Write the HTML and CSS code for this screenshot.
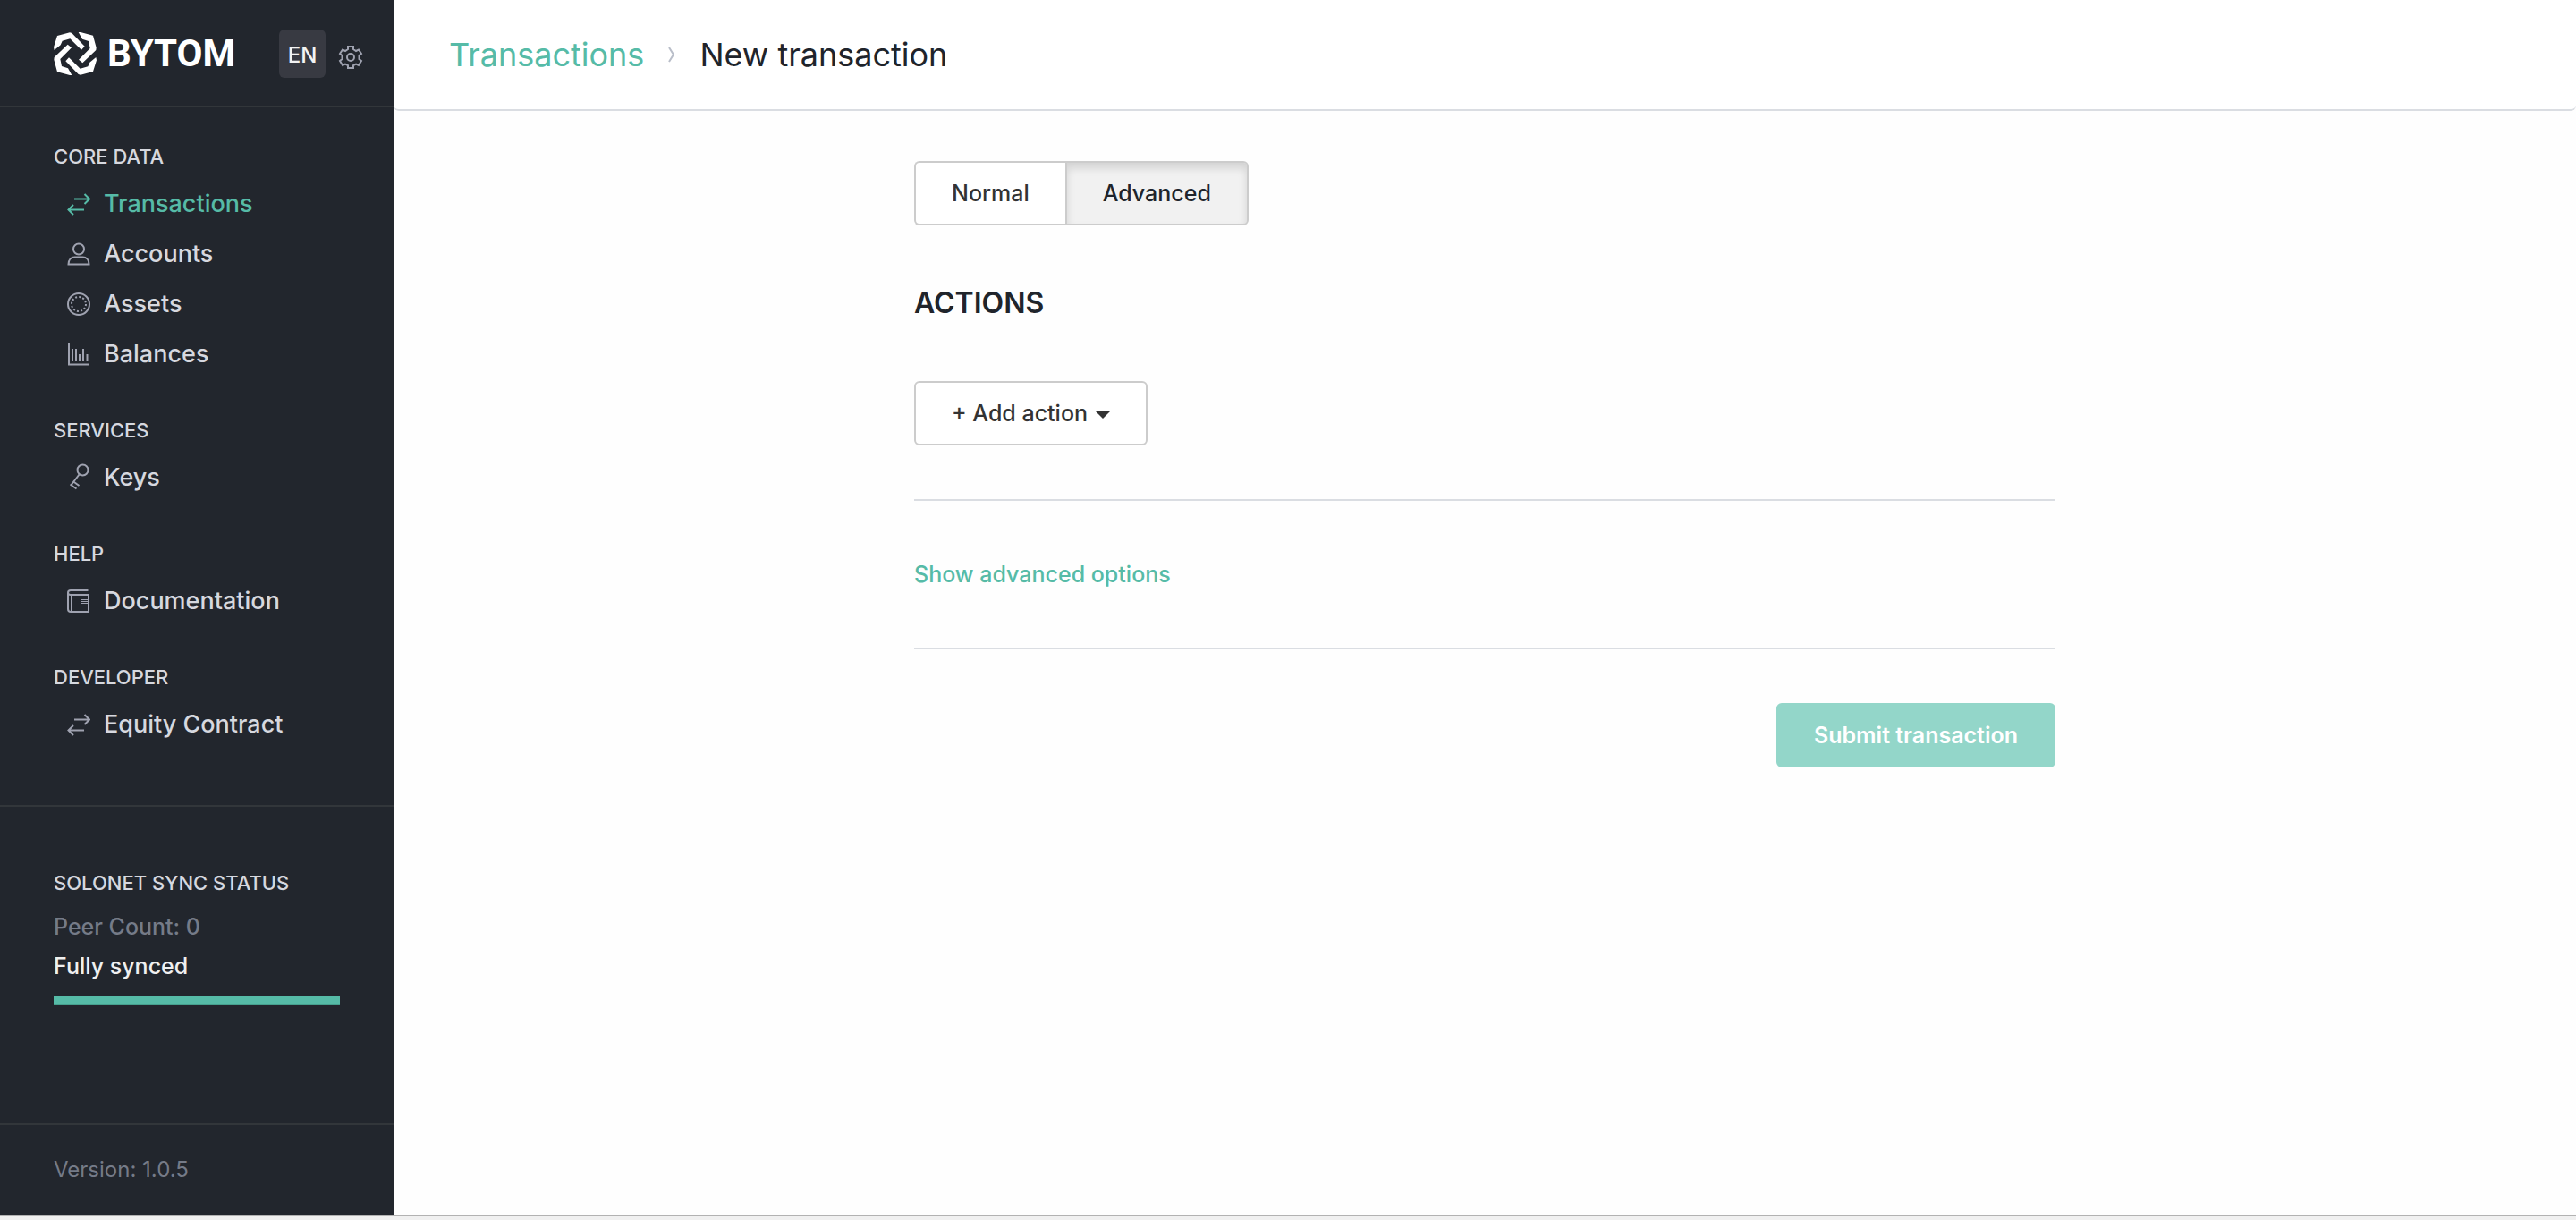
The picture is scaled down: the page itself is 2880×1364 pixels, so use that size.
FILE: index.html
```html
<!DOCTYPE html>
<html lang="en">
<head>
<meta charset="utf-8">
<meta name="viewport" content="width=device-width, initial-scale=1">
<title>New transaction - Bytom</title>
<link rel="stylesheet" href="styles.css">
</head>
<body>
<svg class="sprite" aria-hidden="true">
  <symbol id="icon-transfer" viewBox="0 0 26 26">
    <path d="M8 7.500H25M19.500 2l5.500 5.500-5.500 5.500M19 19.500H1.500M7 14l-5.500 5.500L7 25"/>
  </symbol>
</svg>
<div class="app">
  <aside class="sidebar">
    <header class="sidebar-header">
      <a class="brand" href="#">
        <svg class="brand-mark" viewBox="180 108 144 144" aria-hidden="true">
          <path d="M182 168L180 158L192 120L234 109L241 111L284 155L273 167L235 130L209 137L203 151Z"/>
          <path d="M263 108L270 108L312 119L323 160L322 168L277 211L264 200L302 162L297 138L276 131Z"/>
          <path d="M322 192L324 202L312 240L270 251L263 249L220 205L231 193L269 230L295 223L301 209Z"/>
          <path d="M241 252L234 252L192 241L181 200L182 192L227 149L240 160L202 198L207 222L228 229Z"/>
        </svg>
        <span class="brand-name">BYTOM</span>
      </a>
      <div class="tools">
        <button class="lang" type="button">EN</button>
        <button class="gear" type="button" aria-label="Settings">
          <svg class="icon" viewBox="0 0 26 26" aria-hidden="true">
            <path d="M10 1h6v3l3 2 3-1.500 3 4.500-2.500 2v4l2.500 2-3 5-3-1.500-3 1.500v3h-6v-3l-3-1.500-3 1.500-3-5 2.500-2v-4L1 9l3-4.500L7 6l3-2z"/>
            <circle cx="13" cy="13" r="4"/>
          </svg>
        </button>
      </div>
    </header>

    <nav class="menu">
      <section class="menu-section">
        <h2 class="menu-title">CORE DATA</h2>
        <a class="menu-item active" href="#">
          <svg class="icon" aria-hidden="true"><use href="#icon-transfer"/></svg>Transactions</a>
        <a class="menu-item" href="#">
          <svg class="icon" viewBox="0 0 26 26" aria-hidden="true"><circle cx="13" cy="7.500" r="6"/><path d="M1.500 24.500c0-5 3-8 7-8h9c4 0 7 3 7 8z"/></svg>Accounts</a>
        <a class="menu-item" href="#">
          <svg class="icon" viewBox="0 0 26 26" aria-hidden="true"><circle cx="13" cy="13" r="12"/><circle cx="13" cy="13" r="8" stroke-dasharray="2 2.190"/></svg>Assets</a>
        <a class="menu-item" href="#">
          <svg class="icon" viewBox="0 0 26 26" aria-hidden="true"><path d="M2 1v23.500h23M6 7v14M10 7v14M14 13v8M18 7v14M22.500 13v8"/></svg>Balances</a>
      </section>
      <section class="menu-section">
        <h2 class="menu-title">SERVICES</h2>
        <a class="menu-item" href="#">
          <svg class="icon" viewBox="0 0 26 26" aria-hidden="true"><circle cx="17.500" cy="4.500" r="6"/><path d="M13.500 9.500L4 22M3.500 20.500l7 5M6.500 17l7 5"/></svg>Keys</a>
      </section>
      <section class="menu-section">
        <h2 class="menu-title">HELP</h2>
        <a class="menu-item" href="#">
          <svg class="icon" viewBox="0 0 26 26" aria-hidden="true"><path d="M23.500 1H4C2 1 1 2 1 3.500V22c0 2 1 3 3 3h20V6H4C2 6 1 5 1 3.500M5 6v19"/><path stroke-width="1" d="M16 11.500h8M16 13.500h8M16 15.500h8"/></svg>Documentation</a>
      </section>
      <section class="menu-section">
        <h2 class="menu-title">DEVELOPER</h2>
        <a class="menu-item" href="#">
          <svg class="icon" aria-hidden="true"><use href="#icon-transfer"/></svg>Equity Contract</a>
      </section>
    </nav>

    <section class="sync">
      <h2 class="menu-title">SOLONET SYNC STATUS</h2>
      <p class="peers">Peer Count: 0</p>
      <p class="synced">Fully synced</p>
      <div class="sync-bar"></div>
    </section>

    <footer class="version">Version: 1.0.5</footer>
  </aside>

  <main class="main">
    <header class="page-header">
      <a class="crumb-link" href="#">Transactions</a>
      <svg class="crumb-arrow" viewBox="0 0 10 20" aria-hidden="true"><path d="M2 2l5 8-5 8"/></svg>
      <h1 class="page-title">New transaction</h1>
    </header>
    <form class="form">
      <div class="toggle">
        <button class="btn" type="button">Normal</button>
        <button class="btn pressed" type="button" aria-pressed="true">Advanced</button>
      </div>
      <h2 class="form-title">ACTIONS</h2>
      <button class="btn add" type="button">+ Add action<span class="caret"></span></button>
      <div class="options"><a class="options-link" href="#">Show advanced options</a></div>
      <button class="btn submit" type="submit" disabled>Submit transaction</button>
    </form>
  </main>
</div>
<div class="window-edge"></div>
</body>
</html>
```
FILE: styles.css
```css
* { box-sizing: border-box; }

body {
  display: flex;
  flex-direction: column;
  min-height: 100vh;
  margin: 0;
  background: #fefefe;
  color: #20242b;
  font-family: Inter, "Liberation Sans", sans-serif;
  font-size: 25px;
  font-weight: 500;
  line-height: 36px;
}

h1, h2, p { margin: 0; }
a { text-decoration: none; }
button { font: inherit; cursor: pointer; }

.sprite { display: none; }

.icon {
  flex: none;
  width: 26px;
  height: 26px;
  overflow: visible;
  fill: none;
  stroke: #9fa2b0;
  stroke-width: 2;
}

.app { display: flex; flex: 1; }

.sidebar {
  display: flex;
  flex: none;
  flex-direction: column;
  width: 440px;
  background: #22262d;
}

.sidebar-header {
  display: flex;
  align-items: center;
  justify-content: space-between;
  height: 120px;
  padding: 2px 25px 0 60px;
  border-bottom: 2px solid #32363a;
}

.brand { display: flex; align-items: center; gap: 12px; }
.brand-mark { width: 48px; height: 48px; fill: #fff; }
.brand-name {
  color: #fff;
  font-family: Roboto, sans-serif;
  font-size: 42px;
  font-weight: 700;
  line-height: 48px;
}

.tools { display: flex; align-items: flex-end; gap: 5px; }
.lang {
  width: 52px;
  height: 54px;
  padding: 4px 0 0;
  border: 0;
  border-radius: 6px;
  background: #383a42;
  color: #f3f3f3;
  font-size: 24px;
}
.gear { display: flex; padding: 10px; border: 0; background: none; }

.menu {
  padding: 40px 0 20px;
  border-bottom: 2px solid #32363a;
}
.menu-section { margin-bottom: 42px; }
.menu-title {
  margin-bottom: 10px;
  padding-left: 60px;
  color: #d6d8df;
  font-size: 22px;
  font-weight: 500;
  line-height: 30px;
}
.menu-item {
  display: flex;
  align-items: center;
  gap: 15px;
  height: 56px;
  padding-left: 75px;
  color: #d6d8df;
  font-size: 27px;
}
.active { color: #56bba7; }
.active .icon { stroke: #56bba7; }

.sync { flex: 1; padding: 70px 60px 0; }
.sync .menu-title { padding-left: 0; }
.peers, .synced { line-height: 44px; }
.peers { margin-top: 12px; color: #757b88; }
.synced { color: #f0f0f0; }
.sync-bar {
  height: 10px;
  margin-top: 12px;
  border-bottom: 2px solid #46a08e;
  background: #56bba7;
}

.version {
  height: 102px;
  padding: 32px 60px;
  border-top: 2px solid #32363a;
  color: #757b88;
  font-size: 24px;
  font-weight: 400;
}

.main { flex: 1; min-width: 0; }

.page-header {
  display: flex;
  align-items: center;
  height: 124px;
  padding-left: 62px;
  border-bottom: 2px solid #dadde2;
  border-radius: 6px;
  background: #fff;
  font-size: 36px;
  font-weight: 400;
}
.crumb-link { color: #56bba7; }
.crumb-arrow {
  width: 10px;
  height: 20px;
  margin: 0 26px;
  fill: none;
  stroke: #b9bec9;
  stroke-width: 2;
}
.page-title { font-size: 36px; font-weight: 400; }

.form {
  display: flex;
  flex-direction: column;
  align-items: flex-start;
  max-width: 1276px;
  margin: 0 auto;
  padding: 56px 0;
}

.btn {
  height: 72px;
  padding: 0 40px;
  border: 2px solid #ccc;
  border-radius: 6px;
  background: #fff;
  color: #333;
}

.toggle { display: flex; }
.toggle .btn:first-child {
  border-right: 0;
  border-radius: 6px 0 0 6px;
}
.toggle .btn:last-child { border-radius: 0 6px 6px 0; }
.pressed {
  background: #f1f1f1;
  color: #20242b;
  box-shadow: inset 0 6px 10px rgba(0, 0, 0, 0.125);
}

.form-title {
  margin: 66px 0;
  font-size: 32px;
  font-weight: 600;
  line-height: 42px;
}

.add { display: flex; align-items: center; }
.caret {
  margin: 4px 0 0 9px;
  border: 8px solid transparent;
  border-top-color: #333;
  border-bottom: 0;
}

.options {
  width: 100%;
  margin: 60px 0;
  padding: 64px 0;
  border: solid #dadde2;
  border-width: 2px 0;
}
.options-link { color: #56bba7; }

.submit {
  align-self: flex-end;
  border-color: #93d6c9;
  background: #93d6c9;
  color: #fff;
  font-weight: 600;
}

.window-edge {
  height: 6px;
  border-top: 1px solid #b2b2b2;
  background: #f0f0f0;
}
```
